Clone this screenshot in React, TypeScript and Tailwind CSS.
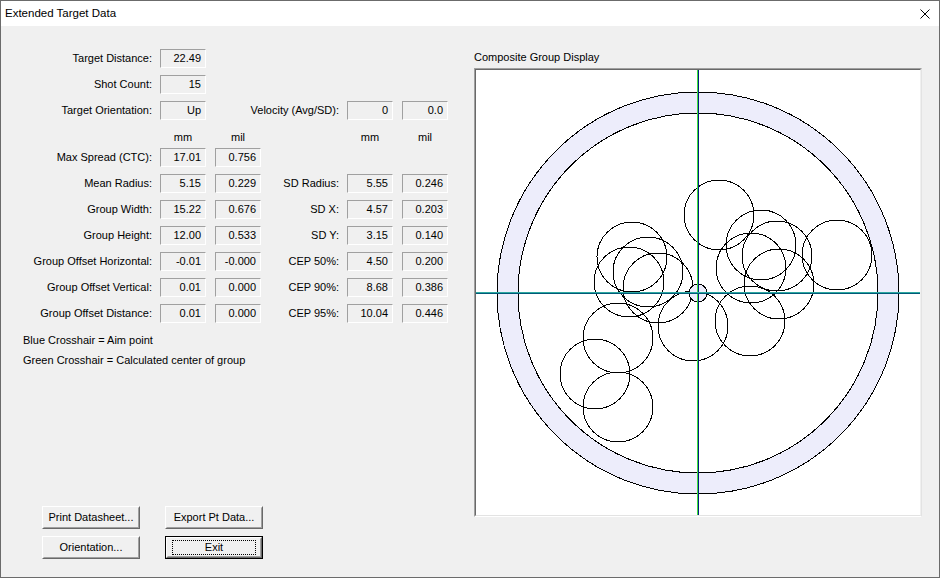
import React from 'react';

const FONT = "font-['Liberation_Sans',Arial,sans-serif]";

const SHOTS: [number, number][] = [
	[719, 215],
	[632, 257],
	[648, 272],
	[629, 282],
	[658, 288],
	[618, 338],
	[595, 374],
	[618, 407],
	[693, 326],
	[750, 321],
	[761, 245],
	[777, 256],
	[751, 268],
	[779, 284],
	[837, 255],
];

type Row = {
	label: string;
	mm: string;
	mil: string;
	rLabel?: string;
	rMm?: string;
	rMil?: string;
};

const ROWS: Row[] = [
	{ label: 'Max Spread (CTC):', mm: '17.01', mil: '0.756' },
	{ label: 'Mean Radius:', mm: '5.15', mil: '0.229', rLabel: 'SD Radius:', rMm: '5.55', rMil: '0.246' },
	{ label: 'Group Width:', mm: '15.22', mil: '0.676', rLabel: 'SD X:', rMm: '4.57', rMil: '0.203' },
	{ label: 'Group Height:', mm: '12.00', mil: '0.533', rLabel: 'SD Y:', rMm: '3.15', rMil: '0.140' },
	{ label: 'Group Offset Horizontal:', mm: '-0.01', mil: '-0.000', rLabel: 'CEP 50%:', rMm: '4.50', rMil: '0.200' },
	{ label: 'Group Offset Vertical:', mm: '0.01', mil: '0.000', rLabel: 'CEP 90%:', rMm: '8.68', rMil: '0.386' },
	{ label: 'Group Offset Distance:', mm: '0.01', mil: '0.000', rLabel: 'CEP 95%:', rMm: '10.04', rMil: '0.446' },
];

function Field({ value }: { value?: string }) {
	if (value === undefined) return <div className="w-[46px] shrink-0" />;
	return (
		<div className="flex h-[19px] w-[46px] shrink-0 items-center justify-end border border-t-[#a0a0a0] border-l-[#a0a0a0] border-b-white border-r-white pr-[4px] leading-none">
			{value}
		</div>
	);
}

function Label({ text, width }: { text?: string; width: string }) {
	return <div className={`flex shrink-0 justify-end whitespace-nowrap ${width}`}>{text}</div>;
}

function Button({ label, isDefault }: { label: string; isDefault?: boolean }) {
	return (
		<div className={`h-[23px] w-[98px] ${isDefault ? 'border border-black' : ''}`}>
			<div className="h-full w-full border border-t-white border-l-white border-b-[#696969] border-r-[#696969]">
				<div className="flex h-full w-full items-center justify-center border border-t-[#f0f0f0] border-l-[#f0f0f0] border-b-[#a0a0a0] border-r-[#a0a0a0] bg-[#f0f0f0]">
					{isDefault ? (
						<div className="flex h-[15px] w-[84px] items-center justify-center border border-dotted border-black">{label}</div>
					) : (
						label
					)}
				</div>
			</div>
		</div>
	);
}

function GroupDisplay() {
	return (
		<div className="h-[449px] w-[448px] border border-t-[#a0a0a0] border-l-[#a0a0a0] border-b-white border-r-[#e3e3e3]">
			<div className="h-full w-full border border-t-[#696969] border-l-[#696969] border-b-[#e3e3e3] border-r-[#f0f0f0] bg-white">
				<svg width="444" height="445" viewBox="476 70 444 445" className="block">
					<circle cx="698" cy="293" r="201" fill="#ededfb" stroke="#000" strokeWidth="1" shapeRendering="crispEdges" />
					<circle cx="698" cy="293" r="180" fill="#fff" stroke="#000" strokeWidth="1" shapeRendering="crispEdges" />
					{SHOTS.map(([x, y], i) => (
						<circle key={i} cx={x} cy={y} r="35" fill="none" stroke="#000" strokeWidth="1" shapeRendering="crispEdges" />
					))}
					<circle cx="698" cy="293" r="9" fill="#ededfb" stroke="#000" strokeWidth="1" shapeRendering="crispEdges" />
					<line x1="697.5" y1="70" x2="697.5" y2="515" stroke="#3ee03e" strokeWidth="1" />
					<line x1="698.5" y1="70" x2="698.5" y2="515" stroke="#00207a" strokeWidth="1" />
					<line x1="476" y1="292.5" x2="920" y2="292.5" stroke="#2ea8a0" strokeWidth="1" />
					<line x1="476" y1="293.5" x2="920" y2="293.5" stroke="#005a78" strokeWidth="1" />
				</svg>
			</div>
		</div>
	);
}

export default function App() {
	return (
		<div className={`flex h-[578px] w-[940px] flex-col border border-[#6b6b6b] bg-[#f0f0f0] text-[11px] text-black ${FONT}`}>
			{/* title bar */}
			<div className="flex h-[25px] shrink-0 items-center justify-between bg-white pl-[4px] pr-[9px]">
				<span className="text-[11.5px]">Extended Target Data</span>
				<svg width="10" height="10" viewBox="0 0 10 10">
					<path d="M0.5 0.5 L9.5 9.5 M9.5 0.5 L0.5 9.5" stroke="#000" strokeWidth="1" />
				</svg>
			</div>

			<div className="flex flex-1">
				{/* data panel */}
				<div className="flex w-[473px] shrink-0 flex-col pt-[19px] pb-[18px]">
					<div className="flex h-[26px] items-center">
						<Label text="Target Distance:" width="w-[151px]" />
						<div className="ml-[8px]"><Field value="22.49" /></div>
					</div>
					<div className="flex h-[26px] items-center">
						<Label text="Shot Count:" width="w-[151px]" />
						<div className="ml-[8px]"><Field value="15" /></div>
					</div>
					<div className="flex h-[26px] items-center">
						<Label text="Target Orientation:" width="w-[151px]" />
						<div className="ml-[8px]"><Field value="Up" /></div>
						<div className="ml-[9px]"><Field /></div>
						<Label text="Velocity (Avg/SD):" width="w-[78px]" />
						<div className="ml-[8px]"><Field value="0" /></div>
						<div className="ml-[9px]"><Field value="0.0" /></div>
					</div>
					<div className="flex h-[21px] items-end leading-[13px]">
						<div className="w-[151px] shrink-0" />
						<div className="ml-[8px] w-[46px] text-center">mm</div>
						<div className="ml-[9px] w-[46px] text-center">mil</div>
						<div className="w-[78px]" />
						<div className="ml-[8px] w-[46px] text-center">mm</div>
						<div className="ml-[9px] w-[46px] text-center">mil</div>
					</div>
					{ROWS.map((r) => (
						<div key={r.label} className="flex h-[26px] items-center">
							<Label text={r.label} width="w-[151px]" />
							<div className="ml-[8px]"><Field value={r.mm} /></div>
							<div className="ml-[9px]"><Field value={r.mil} /></div>
							<Label text={r.rLabel} width="w-[78px]" />
							<div className="ml-[8px]"><Field value={r.rMm} /></div>
							<div className="ml-[9px]"><Field value={r.rMil} /></div>
						</div>
					))}
					<div className="mt-[4px] pl-[22px]">
						<div className="flex h-[20px] items-center">Blue Crosshair = Aim point</div>
						<div className="flex h-[20px] items-center">Green Crosshair = Calculated center of group</div>
					</div>

					<div className="mt-auto flex flex-col gap-[7px] pl-[41px]">
						<div className="flex gap-[25px]">
							<Button label="Print Datasheet..." />
							<Button label="Export Pt Data..." />
						</div>
						<div className="flex gap-[25px]">
							<Button label="Orientation..." />
							<Button label="Exit" isDefault />
						</div>
					</div>
				</div>

				{/* display panel */}
				<div className="flex flex-col pt-[24px]">
					<div className="leading-[14px]">Composite Group Display</div>
					<div className="mt-[4px]">
						<GroupDisplay />
					</div>
				</div>
			</div>
		</div>
	);
}
